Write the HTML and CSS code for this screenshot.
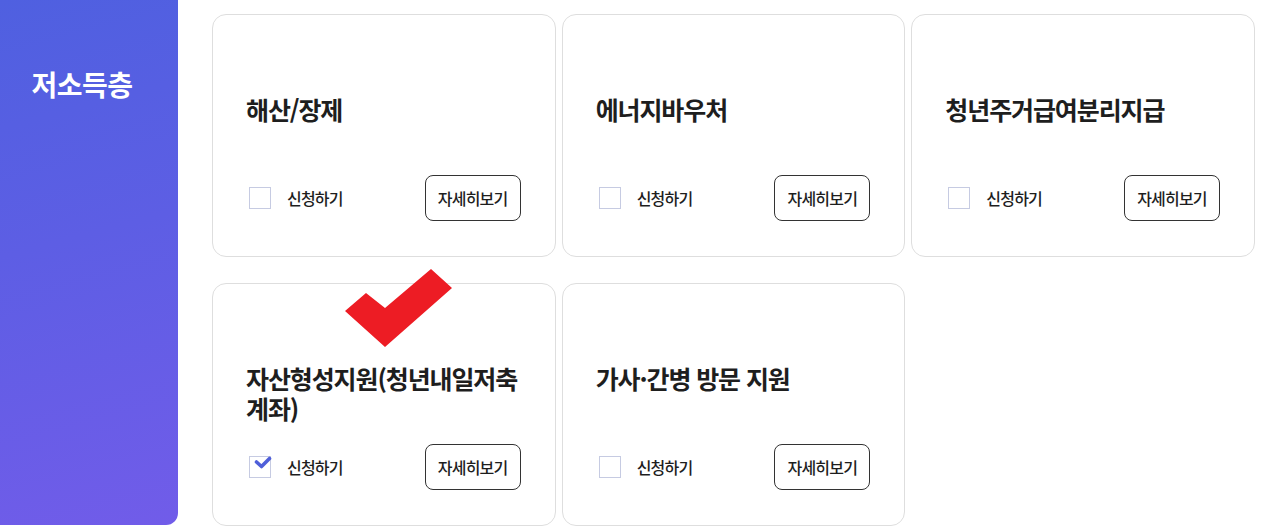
FILE: index.html
```html
<!DOCTYPE html>
<html lang="ko">
<head>
<meta charset="utf-8">
<title>저소득층</title>
<link rel="stylesheet" href="styles.css">
</head>
<body>
<div class="page">
  <aside class="side">
    <h2 class="side-title">저소득층</h2>
  </aside>
  <main class="grid">
    <div class="card">
      <h3 class="card-title">해산/장제</h3>
      <div class="card-foot">
        <label class="apply"><span class="box"></span><span class="apply-text">신청하기</span></label>
        <button class="more">자세히보기</button>
      </div>
    </div>
    <div class="card">
      <h3 class="card-title">에너지바우처</h3>
      <div class="card-foot">
        <label class="apply"><span class="box"></span><span class="apply-text">신청하기</span></label>
        <button class="more">자세히보기</button>
      </div>
    </div>
    <div class="card">
      <h3 class="card-title">청년주거급여분리지급</h3>
      <div class="card-foot">
        <label class="apply"><span class="box"></span><span class="apply-text">신청하기</span></label>
        <button class="more">자세히보기</button>
      </div>
    </div>
    <div class="card">
      <svg class="red-check" viewBox="0 0 107 78" width="107" height="78"><polygon points="0,42 21,24 40,39 86,0 107,19 40,78" fill="#ed1c24"/></svg>
      <h3 class="card-title">자산형성지원(청년내일저축계좌)</h3>
      <div class="card-foot">
        <label class="apply"><span class="box checked"><svg viewBox="0 0 18 13" width="18" height="13"><path d="M2.5 6 L7.5 10.5 L15.5 2.5" fill="none" stroke="#4f5fd9" stroke-width="3.6" stroke-linecap="round" stroke-linejoin="round"/></svg></span><span class="apply-text">신청하기</span></label>
        <button class="more">자세히보기</button>
      </div>
    </div>
    <div class="card">
      <h3 class="card-title">가사·간병 방문 지원</h3>
      <div class="card-foot">
        <label class="apply"><span class="box"></span><span class="apply-text">신청하기</span></label>
        <button class="more">자세히보기</button>
      </div>
    </div>
  </main>
</div>
</body>
</html>
```
FILE: styles.css
```css
* { box-sizing: border-box; }
html, body { margin: 0; padding: 0; background: #fff; }
body {
  font-family: "Noto Sans CJK KR", "Noto Sans", sans-serif;
  color: #222;
}
.page {
  display: flex;
  align-items: flex-start;
  gap: 34px;
  width: 1267px;
}
.side {
  width: 178px;
  height: 525px;
  flex: none;
  background: linear-gradient(165deg, #4f60e0 0%, #5d5ee4 45%, #715ce9 100%);
  border-radius: 0 0 12px 0;
  padding-top: 64px;
  padding-right: 14px;
}
.side-title {
  margin: 0;
  text-align: center;
  color: #fff;
  font-size: 28px;
  font-weight: 700;
  letter-spacing: -0.5px;
  line-height: 40px;
}
.grid {
  width: 1043px;
  margin-top: 14px;
  display: grid;
  grid-template-columns: repeat(3, 1fr);
  column-gap: 6px;
  row-gap: 26px;
}
.card {
  position: relative;
  height: 243px;
  border: 1px solid #dedede;
  border-radius: 14px;
  padding: 79px 34px 35px 33px;
  display: flex;
  flex-direction: column;
  justify-content: space-between;
}
.card-title {
  margin: 0;
  font-size: 25px;
  font-weight: 700;
  line-height: 30px;
  letter-spacing: -1.1px;
  color: #1e1e1e;
}
.card-foot {
  display: flex;
  align-items: center;
  justify-content: space-between;
}
.apply {
  display: flex;
  align-items: center;
  gap: 16px;
  padding-left: 3px;
}
.box {
  width: 22px;
  height: 22px;
  border: 1px solid #c6cbe2;
  background: #fff;
  position: relative;
}
.box svg {
  position: absolute;
  left: 4px;
  top: -1px;
}
.apply-text {
  font-size: 16px;
  font-weight: 500;
  letter-spacing: -0.8px;
  color: #1e1e1e;
}
.more {
  width: 96px;
  height: 46px;
  border: 1px solid #333;
  border-radius: 8px;
  background: #fff;
  font-family: "Noto Sans CJK KR", "Noto Sans", sans-serif;
  font-size: 16px;
  font-weight: 500;
  letter-spacing: -0.8px;
  color: #1e1e1e;
  padding: 0;
}
.red-check {
  position: absolute;
  left: 132px;
  top: -15px;
}
```
